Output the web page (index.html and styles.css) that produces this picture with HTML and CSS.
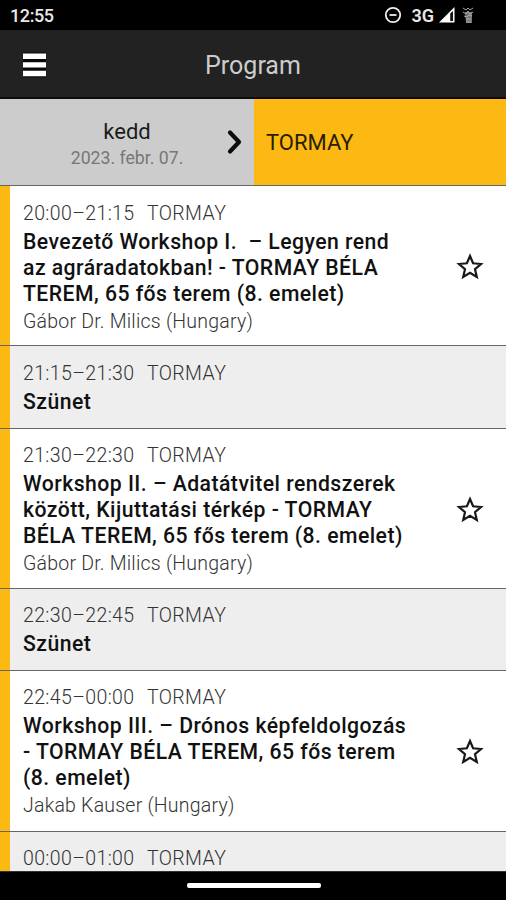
FILE: index.html
```html
<!DOCTYPE html>
<html lang="hu">
<head>
<meta charset="utf-8">
<title>Program</title>
<link rel="stylesheet" href="styles.css">
</head>
<body>
<div class="status">
  <span class="clock">12:55</span>
  <svg class="dnd" width="18" height="18" viewBox="0 0 18 18"><circle cx="9" cy="9" r="7.2"/><path d="M5.5 9h7"/></svg>
  <span class="net">3G</span>
  <svg class="signal" width="16" height="16" viewBox="0 0 16 16"><path d="M0 15.5 15.5 0v15.5z" fill="#fff"/><path d="M11.2 6.5 14 4v10h-2.8z" fill="#111"/></svg>
  <svg class="battery" width="10" height="16" viewBox="0 0 10 16"><path d="M2 5h7v11H3z" fill="#777"/><path d="M0 1l3 2 2-2 2 2 3-2M0 5l3 2 2-3 2 3 3-2M1 9l3 1 2-2 3 1M3 12h5M3 15h5" fill="none" stroke="#aaa"/></svg>
</div>
<header class="bar">
  <svg class="burger" width="26" height="28" viewBox="0 0 26 28"><path d="M1 1.5h23v25H1z" fill="#080808"/><path d="M1 2.5h23v5.4H1zm0 8.7h23v5.4H1zm0 8.6h23v5.4H1z" fill="#fff"/></svg>
  <h1>Program</h1>
</header>
<nav class="tabs">
  <div class="day">
    <div class="day-name">kedd</div>
    <div class="date">2023. febr. 07.</div>
    <svg class="next" width="16" height="26" viewBox="0 0 16 26"><path d="M3 3.5 12 13 3 22.5"/></svg>
  </div>
  <div class="room">TORMAY</div>
</nav>
<main class="list">
  <article class="item tall lead">
    <div class="time"><span>20:00–21:15</span><span>TORMAY</span></div>
    <h2>Bevezető Workshop I.&nbsp; – Legyen rend<br>az agráradatokban! - TORMAY BÉLA<br>TEREM, 65 fős terem (8. emelet)</h2>
    <p>Gábor Dr. Milics (Hungary)</p>
    <svg class="star" width="28" height="28" viewBox="0 0 28 28"><path d="M14 3 17.1 10.3 25 11 19 16.2 20.8 24 14 19.8 7.2 24 9 16.2 3 11 10.9 10.3z"/></svg>
  </article>
  <article class="item break first lead">
    <div class="time"><span>21:15–21:30</span><span>TORMAY</span></div>
    <h2>Szünet</h2>
  </article>
  <article class="item tall">
    <div class="time"><span>21:30–22:30</span><span>TORMAY</span></div>
    <h2>Workshop II. – Adatátvitel rendszerek<br>között, Kijuttatási térkép - TORMAY<br>BÉLA TEREM, 65 fős terem (8. emelet)</h2>
    <p>Gábor Dr. Milics (Hungary)</p>
    <svg class="star" width="28" height="28" viewBox="0 0 28 28"><path d="M14 3 17.1 10.3 25 11 19 16.2 20.8 24 14 19.8 7.2 24 9 16.2 3 11 10.9 10.3z"/></svg>
  </article>
  <article class="item break">
    <div class="time"><span>22:30–22:45</span><span>TORMAY</span></div>
    <h2>Szünet</h2>
  </article>
  <article class="item tall last">
    <div class="time"><span>22:45–00:00</span><span>TORMAY</span></div>
    <h2>Workshop III. – Drónos képfeldolgozás<br>- TORMAY BÉLA TEREM, 65 fős terem<br>(8. emelet)</h2>
    <p>Jakab Kauser (Hungary)</p>
    <svg class="star" width="28" height="28" viewBox="0 0 28 28"><path d="M14 3 17.1 10.3 25 11 19 16.2 20.8 24 14 19.8 7.2 24 9 16.2 3 11 10.9 10.3z"/></svg>
  </article>
  <article class="item break">
    <div class="time"><span>00:00–01:00</span><span>TORMAY</span></div>
  </article>
</main>
<footer class="home"><div class="pill"></div></footer>
</body>
</html>
```
FILE: styles.css
```css
* { box-sizing: border-box; }
body {
  margin: 0;
  height: 900px;
  overflow: hidden;
  display: flex;
  flex-direction: column;
  background: #000;
  font-family: Roboto, "Liberation Sans", sans-serif;
}
h1, h2, p { margin: 0; }
svg { display: block; flex: none; }
.status {
  height: 30px;
  flex: none;
  display: flex;
  align-items: center;
  padding: 2px 33px 0 10px;
  color: #e8e8e8;
}
.clock { font-size: 18px; font-weight: 500; line-height: 30px; margin-right: auto; letter-spacing: -0.4px; }
.dnd { fill: none; stroke: #eee; stroke-width: 1.8; margin-right: 9px; margin-top: -2px; }
.net { font-size: 18px; font-weight: 600; margin-right: 5px; margin-top: -2px; }
.signal { margin-right: 8px; margin-top: -2px; }
.battery { margin-top: -2px; }
.bar {
  height: 69px;
  flex: none;
  display: grid;
  grid-template-columns: 1fr auto 1fr;
  align-items: center;
  padding: 3px 22px 0;
  background: #222;
  border-bottom: 2px solid #0c0c0e;
}
.bar h1 { font-size: 25px; font-weight: 400; color: #ccc; line-height: 32px; padding-top: 2px; }
.tabs { height: 87px; flex: none; display: flex; border-bottom: 1.5px solid #666; }
.day {
  width: 254px;
  position: relative;
  background: #ccc;
  text-align: center;
  padding-top: 20px;
}
.day-name { font-size: 22px; line-height: 26px; color: #1c1c1c; }
.date { font-size: 17.7px; line-height: 26px; color: #777; }
.next { position: absolute; right: 11px; top: 30px; fill: none; stroke: #0c0c0c; stroke-width: 4.2; stroke-linecap: round; stroke-linejoin: round; }
.room { flex: 1; background: #fdb913; color: #2a2000; font-size: 22px; line-height: 88px; padding-left: 12px; }
.list { flex: 1; min-height: 0; overflow: hidden; background: #fff; }
.item {
  position: relative;
  height: 82px;
  padding: 14px 0 0 23px;
  border-bottom: 1px solid #666;
  background: linear-gradient(90deg, #fdb913 10px, #fff 10px);
}
.break { background: linear-gradient(90deg, #fdb913 10px, #eee 10px); }
.tall { height: 160px; }
.first { height: 83px; }
.last { height: 161px; }
.lead { padding-top: 15px; }
.time { display: flex; gap: 12.5px; font-size: 19.5px; font-weight: 300; line-height: 26px; letter-spacing: 0.37px; color: #333; }
.item h2 { font-size: 21.2px; font-weight: 500; line-height: 26px; letter-spacing: 0.46px; color: #111; white-space: nowrap; margin-top: 2px; }
.item p { font-size: 19.5px; font-weight: 300; line-height: 26px; letter-spacing: 0.22px; color: #333; margin-top: 2px; }
.star { position: absolute; right: 22px; top: 67px; fill: none; stroke: #181818; stroke-width: 2.2; }
.home { height: 29px; flex: none; display: flex; justify-content: center; padding: 11px 0 0 1px; border-top: 1px solid #333; }
.pill { width: 134px; height: 5px; border-radius: 2px; background: #fff; }
```
